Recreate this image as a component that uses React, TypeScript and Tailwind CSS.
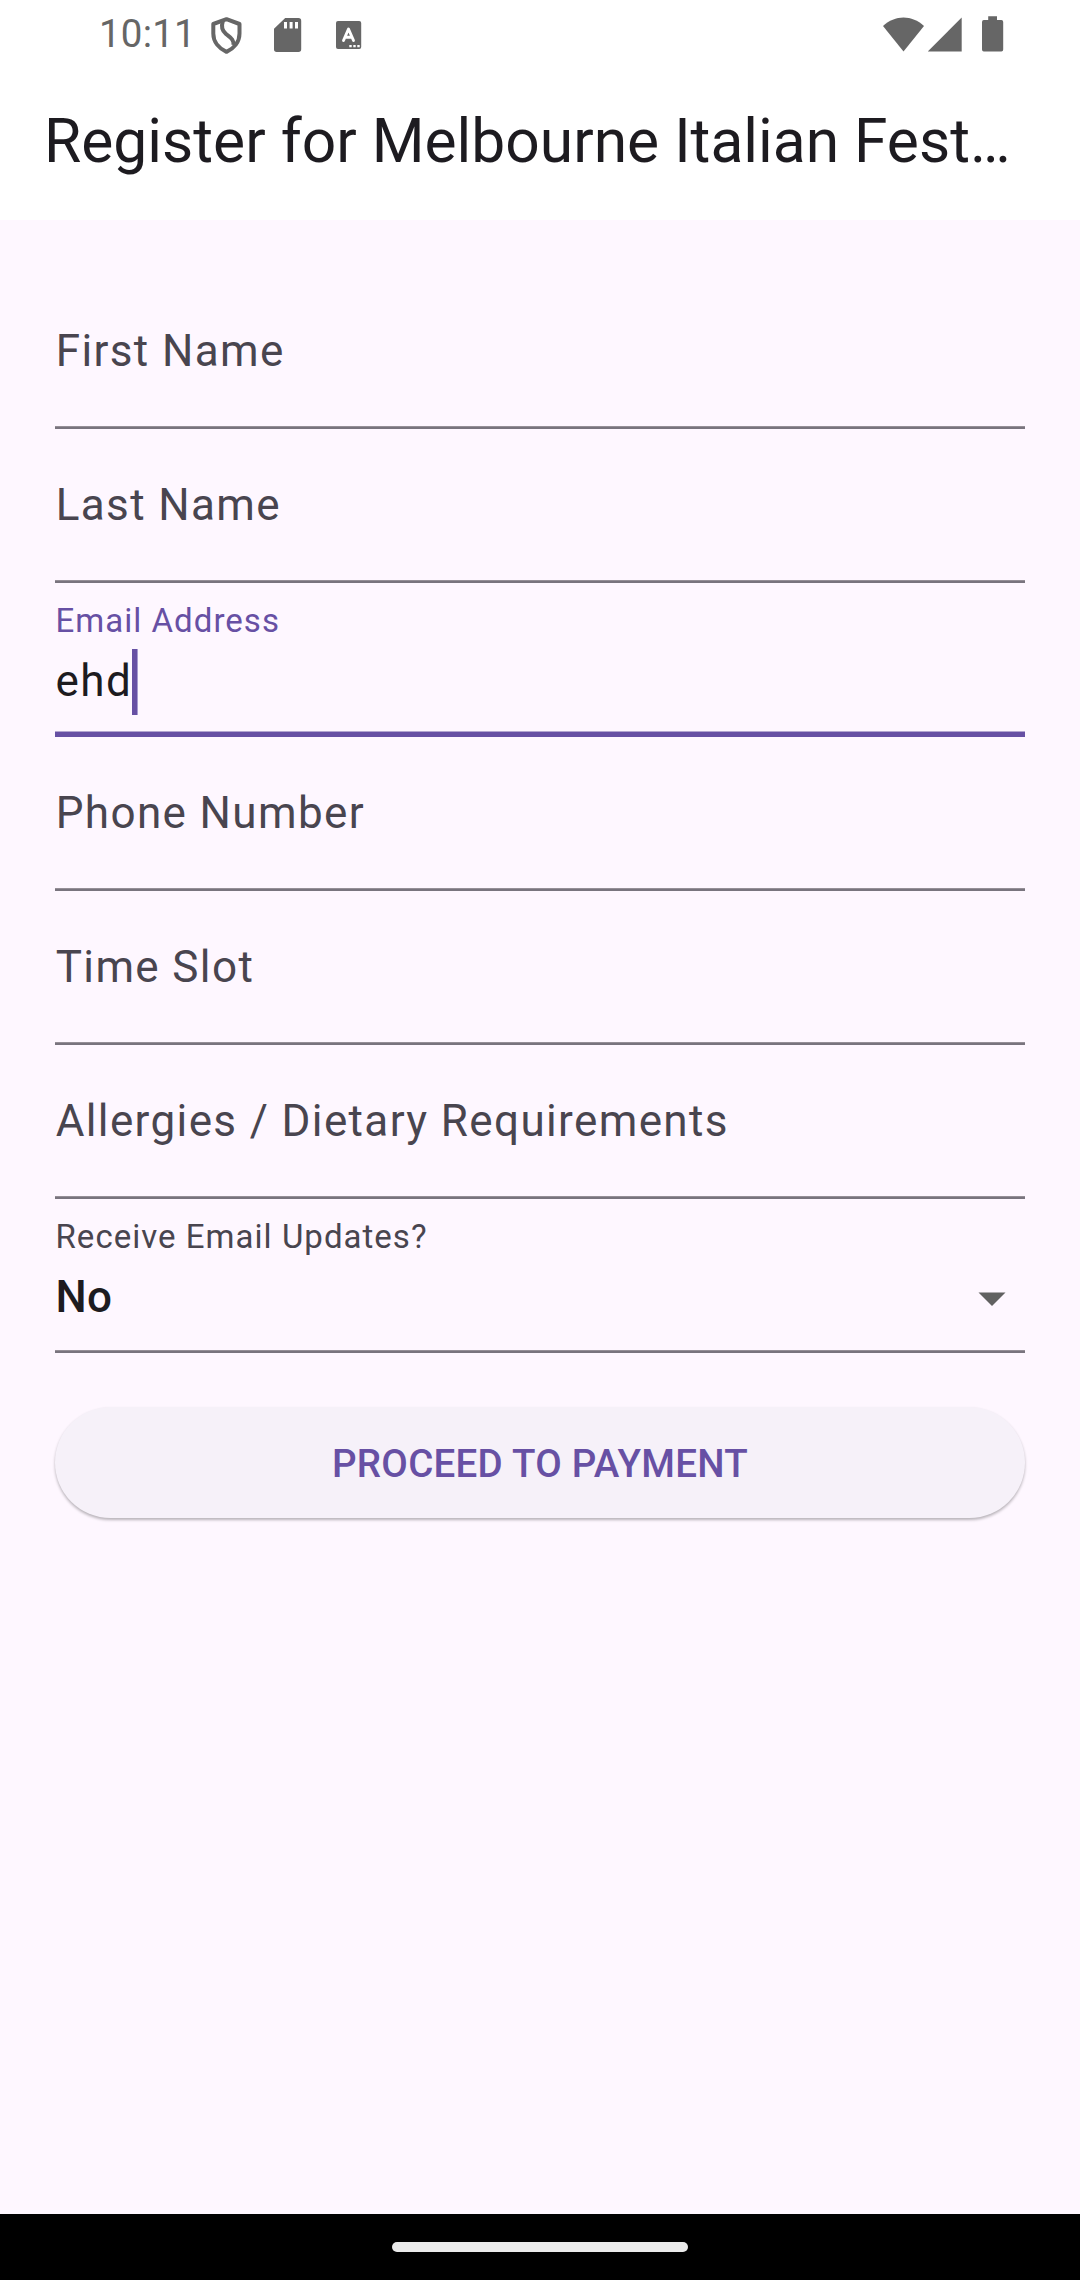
import React from "react";

function ShieldIcon() {
  return (
    <svg width="32" height="38" viewBox="0 0 32 38" fill="none" stroke="#666666" strokeWidth="4" strokeLinejoin="round">
      <path d="M16.500 2.200 L29.500 7 V16.500 C29.500 25 24 31.500 16.500 34.800 C9 31.500 3.300 25 3.300 16.500 V7 Z" />
      <path d="M12.800 4.300 C11 9.500 12 13.500 16 17 C20 20.500 24 22 23.500 28" />
    </svg>
  );
}

function SdCardIcon() {
  return (
    <svg width="28" height="34" viewBox="0 0 28 34">
      <path
        fill="#666666"
        fillRule="evenodd"
        d="M11.200 0 H24.500 A2.700 2.700 0 0 1 27.200 2.700 V31.300 A2.700 2.700 0 0 1 24.500 34 H2.700 A2.700 2.700 0 0 1 0 31.300 V10.700 Z M10 4 V10.500 H13 V4 Z M15.600 4 V10.500 H18.600 V4 Z M21 4 V10.500 H24 V4 Z"
      />
    </svg>
  );
}

function KeyboardIcon() {
  return (
    <svg width="26" height="28" viewBox="0 0 26 28">
      <rect width="25.200" height="28" rx="2" fill="#666666" />
      <path d="M7.500 19.500 L12.500 8 L17.500 19.500 M9.500 16.200 H15.500" fill="none" stroke="#ffffff" strokeWidth="2.900" strokeLinecap="round" strokeLinejoin="round" />
      <path d="M13.300 24 h2.400 v2.200 h-2.400 z M17.300 24 h2.400 v2.200 h-2.400 z M21.300 24 h2.400 v2.200 h-2.400 z" fill="#ffffff" />
    </svg>
  );
}

function StatusBar() {
  return (
    <header className="flex h-[66px] items-start bg-white pl-[99px] pr-[76px]">
      <span className="mt-[11px] w-[111px] text-[38.5px] leading-[46px] tracking-[0.2px] text-[#666666]">10:11</span>
      <div className="mt-[17px] flex items-start">
        <ShieldIcon />
        <div className="ml-[32px] mt-px">
          <SdCardIcon />
        </div>
        <div className="ml-[34px] mt-1">
          <KeyboardIcon />
        </div>
      </div>
      <div className="ml-auto mt-4 flex items-start">
        <svg width="42" height="36" viewBox="0 0 42 36" fill="#666666">
          <path d="M0 10 C12 -1.500 29 -1.500 41 10 L20.500 35.500 Z" />
        </svg>
        <svg className="ml-[3px]" width="34" height="36" viewBox="0 0 34 36" fill="#666666">
          <path d="M33.700 1.500 V35.500 H-0.300 Z" />
        </svg>
        <svg className="ml-5" width="22" height="36" viewBox="0 0 22 36" fill="#666666">
          <path d="M6.200 0.300 H15 V4 H19 A2 2 0 0 1 21.200 6 V33.500 A2 2 0 0 1 19 35.500 H2.200 A2 2 0 0 1 0 33.500 V6 A2 2 0 0 1 2.200 4 H6.200 Z" />
        </svg>
      </div>
    </header>
  );
}

type FieldProps = {
  label: string;
  value?: string;
  focused?: boolean;
  select?: boolean;
};

function Field({ label, value, focused, select }: FieldProps) {
  if (value === undefined) {
    return (
      <div className="flex h-[154px] flex-col justify-between pt-[54px] text-[#49454f]">
        <span className="pl-[0.7px] text-[44px] leading-[44px] tracking-[1.375px]">{label}</span>
        <div className="h-[3px] border-t border-[#958f97] bg-[#79747e]" />
      </div>
    );
  }
  return (
    <div className="flex h-[154px] flex-col pt-[22px]">
      <span
        className={
          focused
            ? "pl-[0.5px] text-[33px] leading-[32px] tracking-[1.03px] text-[#6750a4]"
            : "pl-[0.5px] text-[33px] leading-[32px] tracking-[1.03px] text-[#49454f]"
        }
      >
        {label}
      </span>
      <div className="mt-3 flex h-[66px] items-center text-[#1d1b20]">
        <span
          className={
            select
              ? "mt-[-2px] pl-[0.5px] text-[44px] font-medium leading-[64px] tracking-[0.3px]"
              : "mt-[-2px] pl-[0.6px] text-[44px] leading-[64px] tracking-[1.375px]"
          }
        >
          {value}
        </span>
        {focused && <div className="h-[66px] w-[6px] border-r border-[#a79bd0] bg-[#6750a4]" />}
        {select && (
          <svg className="ml-auto mr-[19px] mt-[2px]" width="28" height="14" viewBox="0 0 28 14" fill="#616161">
            <path d="M0.500 0.500 H27.500 L14 14 Z" />
          </svg>
        )}
      </div>
      {focused ? (
        <div className="mt-auto h-[6px] border-t border-[#b3a6d0] bg-[#6750a4]" />
      ) : (
        <div className="mt-auto h-[3px] border-t border-[#958f97] bg-[#79747e]" />
      )}
    </div>
  );
}

export default function App() {
  return (
    <div className="flex h-[2280px] w-[1080px] flex-col overflow-hidden bg-[#fef7ff] font-['Roboto',sans-serif]">
      <StatusBar />
      <div className="flex h-[154px] items-start bg-white pl-11 pt-[38px]">
        <h1 className="whitespace-nowrap text-[60.5px] leading-[76px] text-[#1d1b20]">
          Register for Melbourne Italian Fest…
        </h1>
      </div>
      <main className="flex flex-1 flex-col px-[55px] pt-[55px]">
        <Field label="First Name" />
        <Field label="Last Name" />
        <Field label="Email Address" value="ehd" focused />
        <Field label="Phone Number" />
        <Field label="Time Slot" />
        <Field label="Allergies / Dietary Requirements" />
        <Field label="Receive Email Updates?" value="No" select />
        <button className="mt-[54px] h-[111px] w-full rounded-full bg-[#f6f1f9] pt-[2px] text-[38.5px] font-medium leading-[46px] tracking-[0.275px] text-[#6750a4] shadow-[0_2px_3px_rgba(0,0,0,0.28)]">
          PROCEED TO PAYMENT
        </button>
      </main>
      <footer className="flex h-[66px] items-start justify-center bg-black pt-7">
        <div className="h-[10px] w-[296px] rounded-full bg-[#ebebeb]" />
      </footer>
    </div>
  );
}
